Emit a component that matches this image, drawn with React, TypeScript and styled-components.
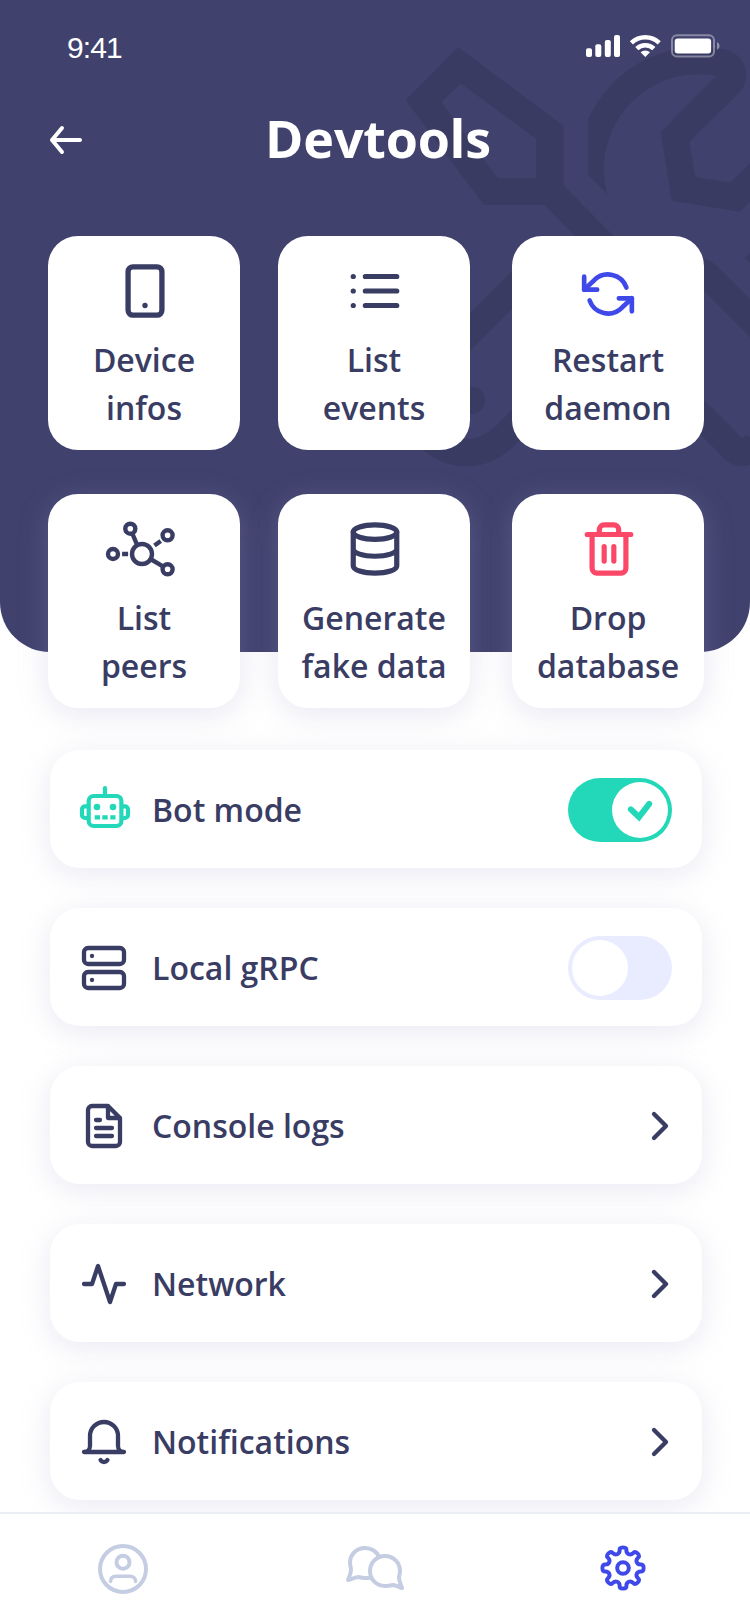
import React from "react";
import styled, { createGlobalStyle } from "styled-components";

const color = {
  navy: "#40416d",
  tool: "#393b62",
  ink: "#393c63",
  blue: "#3f49ea",
  red: "#fc4868",
  green: "#22d8b8",
  lavender: "#e9ecff",
  mist: "#c5cde2",
  line: "#eceef6",
};

const GlobalStyle = createGlobalStyle`
  *, *::before, *::after { box-sizing: border-box; }
  body { margin: 0; background: #fff; }
`;

const Screen = styled.div`
  display: flex;
  flex-direction: column;
  width: 750px;
  height: 1624px;
  overflow: hidden;
  background: #fff;
  color: ${color.ink};
  font-family: "Open Sans", "Noto Sans", sans-serif;
`;

const Header = styled.header`
  position: relative;
  z-index: 1;
  flex: none;
  height: 652px;
  background: ${color.navy};
  border-radius: 0 0 50px 50px;
`;

const ToolsArt = styled.svg`
  position: absolute;
  top: 0;
  left: 0;
  pointer-events: none;
`;

const StatusBar = styled.div`
  position: relative;
  display: flex;
  justify-content: space-between;
  height: 94px;
  padding: 30px 28px 0 67px;
`;

const Clock = styled.span`
  color: #fff;
  font: 400 30px/36px "Liberation Sans", Arial, sans-serif;
  letter-spacing: -0.9px;
`;

const TitleBar = styled.div`
  position: relative;
  display: grid;
  grid-template-columns: 48px 1fr 48px;
  align-items: center;
  height: 92px;
  padding: 0 39px 0 45px;
`;

const BackButton = styled.button`
  display: flex;
  padding: 0;
  border: 0;
  background: none;
`;

const Title = styled.h1`
  margin: 0;
  padding-bottom: 4px;
  color: #fff;
  font-size: 52px;
  font-weight: 700;
  letter-spacing: -0.2px;
  line-height: 72px;
  text-align: center;
`;

const TileGrid = styled.div`
  position: relative;
  display: grid;
  grid-template-columns: 230px 234px 192px;
  row-gap: 44px;
  margin: 50px 0 0 48px;
`;

const Tile = styled.div<{ $raised?: boolean }>`
  display: flex;
  flex-direction: column;
  align-items: center;
  width: 192px;
  height: 214px;
  padding-top: 26px;
  border-radius: 30px;
  background: #fff;
  box-shadow: ${(p) => (p.$raised ? "0 6px 30px rgba(160, 160, 205, 0.25)" : "none")};
`;

const TileIcon = styled.div`
  display: flex;
  align-items: center;
  justify-content: center;
  height: 58px;
  padding-left: 2px;
`;

const TileLabel = styled.div`
  margin-top: 16px;
  font-size: 32px;
  font-weight: 600;
  line-height: 48px;
  text-align: center;
  white-space: pre-line;
`;

const List = styled.main`
  display: flex;
  flex: 1;
  flex-direction: column;
  gap: 40px;
  min-height: 0;
  overflow: hidden;
  padding: 98px 48px 0 50px;
`;

const Row = styled.div<{ $end: number }>`
  display: flex;
  flex: none;
  align-items: center;
  height: 118px;
  padding: 0 ${(p) => p.$end}px 0 30px;
  border-radius: 30px;
  background: #fff;
  box-shadow: 0 6px 30px rgba(160, 160, 205, 0.23);
`;

const RowIcon = styled.div`
  display: flex;
  width: 50px;
  padding-top: 2px;
`;

const RowLabel = styled.div`
  flex: 1;
  padding-left: 22px;
  padding-top: 2px;
  font-size: 32px;
  font-weight: 600;
  line-height: 44px;
`;

const Toggle = styled.div<{ $on?: boolean }>`
  display: flex;
  justify-content: ${(p) => (p.$on ? "flex-end" : "flex-start")};
  width: 104px;
  height: 64px;
  padding: 4px;
  margin-top: 2px;
  border-radius: 32px;
  background: ${(p) => (p.$on ? color.green : color.lavender)};
`;

const Knob = styled.div`
  width: 56px;
  height: 56px;
  border-radius: 50%;
  background: #fff;
`;

const ChevronBox = styled.div`
  display: flex;
  padding-top: 2px;
`;

const TabBar = styled.nav`
  display: flex;
  flex: none;
  align-items: flex-start;
  justify-content: space-between;
  height: 112px;
  padding: 28px 98px 0 94px;
  border-top: 2px solid ${color.line};
  background: #fff;
`;

type IconProps = { size: number; stroke?: string; width?: number; children: React.ReactNode };

const Icon = ({ size, stroke = color.ink, width = 2.15, children }: IconProps) => (
  <svg
    width={size}
    height={size}
    viewBox="0 0 24 24"
    fill="none"
    stroke={stroke}
    strokeWidth={width}
    strokeLinecap="round"
    strokeLinejoin="round"
  >
    {children}
  </svg>
);

const Peers = () => (
  <svg width="72" height="58" viewBox="108.7 520 72 58" overflow="visible" fill="none" stroke={color.ink} strokeWidth="4.4">
    <circle cx="141.7" cy="554" r="10" />
    <circle cx="112.7" cy="554" r="5" />
    <circle cx="130" cy="528.7" r="5" />
    <circle cx="167.3" cy="535.3" r="5" />
    <circle cx="167.3" cy="569.3" r="5" />
    <path d="M132 533.5l4.4 10.4M151 559.5l11.6 6.8" />
    <path d="M121.8 554h6M154.2 545.6l6.2-4.6" />
  </svg>
);

const Robot = () => (
  <svg width="50" height="48" viewBox="80 786 50 48" overflow="visible" fill="none" stroke={color.green} strokeWidth="4.2">
    <rect x="88.7" y="796" width="32.7" height="30" rx="5" />
    <path d="M105 788v7" strokeLinecap="round" />
    <path d="M88 806.3h-3a3 3 0 0 0-3 3V815a3 3 0 0 0 3 3h3M122 806.3h3a3 3 0 0 1 3 3V815a3 3 0 0 1-3 3h-3" />
    <path d="M94.7 817.4h5.3M102.3 817.4h5.4M110.3 817.4h5.2" />
    <g fill={color.green} stroke="none">
      <circle cx="97" cy="807" r="3.3" />
      <circle cx="113" cy="807" r="3.3" />
    </g>
  </svg>
);

// Eight lobes around the origin, each joined to the next through a rounded valley.
const gearPath = (() => {
  const turn = (x: number, y: number, deg: number) => {
    const a = (deg * Math.PI) / 180;
    return `${(x * Math.cos(a) - y * Math.sin(a)).toFixed(2)} ${(x * Math.sin(a) + y * Math.cos(a)).toFixed(2)}`;
  };
  let d = "M0 -20.6";
  for (let i = 0; i < 8; i++) {
    const tip = i * 45;
    const valley = tip + 22.5;
    d += ` C${turn(6.4, -20.6, tip)} ${turn(-5.4, -14.9, valley)} ${turn(0, -14.9, valley)}`;
    d += ` C${turn(5.4, -14.9, valley)} ${turn(-6.4, -20.6, tip + 45)} ${turn(0, -20.6, tip + 45)}`;
  }
  return d + "Z";
})();

const tiles = [
  {
    label: "Device\ninfos",
    icon: (
      <Icon size={58} width={2.2}>
        <rect x="5" y="2" width="14" height="20" rx="2" />
        <path d="M12 18h.01" />
      </Icon>
    ),
  },
  {
    label: "List\nevents",
    icon: (
      <Icon size={58}>
        <path d="M8 6h13M8 12h13M8 18h13M3 6h.01M3 12h.01M3 18h.01" />
      </Icon>
    ),
  },
  {
    label: "Restart\ndaemon",
    icon: (
      <svg
        width="54"
        height="58"
        viewBox="0 -2.77 24.92 26.77"
        overflow="visible"
        fill="none"
        stroke={color.blue}
        strokeWidth="2.15"
        strokeLinecap="round"
        strokeLinejoin="round"
      >
        <path d="M1 4v6h6M23 20v-6h-6" />
        <path d="M20.49 9A9 9 0 0 0 5.64 5.64L1 10m22 4l-4.64 4.36A9 9 0 0 1 3.51 15" />
      </svg>
    ),
  },
  { label: "List\npeers", icon: <Peers />, raised: true },
  {
    label: "Generate\nfake data",
    raised: true,
    icon: (
      <Icon size={58}>
        <ellipse cx="12" cy="5" rx="9" ry="3" />
        <path d="M21 12c0 1.66-4 3-9 3s-9-1.34-9-3M3 5v14c0 1.66 4 3 9 3s9-1.34 9-3V5" />
      </Icon>
    ),
  },
  {
    label: "Drop\ndatabase",
    raised: true,
    icon: (
      <Icon size={58} stroke={color.red}>
        <path d="M3 6h18M19 6v14a2 2 0 0 1-2 2H7a2 2 0 0 1-2-2V6m3 0V4a2 2 0 0 1 2-2h4a2 2 0 0 1 2 2v2M10 11v6M14 11v6" />
      </Icon>
    ),
  },
];

const Chevron = () => (
  <ChevronBox>
    <Icon size={48}>
      <path d="M9 18l6-6-6-6" />
    </Icon>
  </ChevronBox>
);

const rows = [
  {
    label: "Bot mode",
    icon: <Robot />,
    end: 30,
    control: (
      <Toggle $on>
        <Knob>
          <svg width="56" height="56" viewBox="612 782 56 56" fill="none" stroke={color.green} strokeWidth="6">
            <path d="M630.9 809.4l8.1 7.6 10.2-13.2" strokeLinecap="round" />
          </svg>
        </Knob>
      </Toggle>
    ),
  },
  {
    label: "Local gRPC",
    end: 30,
    icon: (
      <Icon size={48}>
        <rect x="2" y="2" width="20" height="8" rx="2" />
        <rect x="2" y="14" width="20" height="8" rx="2" />
        <path d="M6 6h.01M6 18h.01" />
      </Icon>
    ),
    control: (
      <Toggle>
        <Knob />
      </Toggle>
    ),
  },
  {
    label: "Console logs",
    end: 18,
    icon: (
      <Icon size={48}>
        <path d="M14 2H6a2 2 0 0 0-2 2v16a2 2 0 0 0 2 2h12a2 2 0 0 0 2-2V8zM14 2v6h6M16 13H8M16 17H8M10 9H8" />
      </Icon>
    ),
    control: <Chevron />,
  },
  {
    label: "Network",
    end: 18,
    icon: (
      <Icon size={48}>
        <path d="M22 12h-4l-3 9L9 3l-3 9H2" />
      </Icon>
    ),
    control: <Chevron />,
  },
  {
    label: "Notifications",
    end: 18,
    icon: (
      <Icon size={48}>
        <path d="M22 17H2a3 3 0 0 0 3-3V9a7 7 0 0 1 14 0v5a3 3 0 0 0 3 3zM13.73 21a2 2 0 0 1-3.46 0" />
      </Icon>
    ),
    control: <Chevron />,
  },
];

export default function App() {
  return (
    <Screen>
      <GlobalStyle />
      <Header>
        <ToolsArt width="750" height="652" viewBox="0 0 750 652" fill={color.tool}>
          <path
            fillRule="evenodd"
            d="M458.3 47.3L563.3 125.7V185.3L660 283L640 302L544.7 205H484L405.7 100.3ZM460.7 83.3L441.3 102.3L497.7 178H536.3V139Z"
          />
          <path d="M588.3 119.3A122 122 0 0 1 721.7 49A26 26 0 0 1 740 91.7L689.3 141.7L695.3 177L730.3 182.7L750 163.3V201.7L740 211.7L671.7 200.7L660.7 132.3L716 75.7A95 95 0 0 0 607.3 194.3L588.3 175.3Z" />
          <path d="M750 253.5L744.5 258L750 262.5Z" />
          <path
            fill="none"
            stroke={color.tool}
            strokeWidth="27"
            d="M530 272L429 373A48 48 0 0 0 463.5 452.7C480 453.5 494 446 504 437L600 341"
          />
          <circle cx="471.3" cy="400.3" r="13.7" />
          <path
            fill="none"
            stroke={color.tool}
            strokeWidth="27"
            d="M640 320L685 277Q697 265 709 277L760 328M640 355L727 442Q742 463 757 442"
          />
        </ToolsArt>
        <StatusBar>
          <Clock>9:41</Clock>
          <svg width="140" height="30" viewBox="582 30 140 30" fill="#fff">
            <rect x="586" y="48.3" width="6" height="8.7" rx="2" />
            <rect x="595.3" y="44.3" width="6" height="12.7" rx="2" />
            <rect x="604.8" y="40" width="6" height="17" rx="2" />
            <rect x="614" y="35" width="6" height="22" rx="2" />
            <g fill="none" stroke="#fff" strokeWidth="4.6">
              <path d="M631.4 42.8A20.2 20.2 0 0 1 659.2 42.8" />
              <path d="M636.8 48.6A12.4 12.4 0 0 1 653.8 48.6" />
            </g>
            <path d="M640.6 52.3A7 7 0 0 1 650 52.3L645.3 57Z" />
            <rect x="672" y="35.3" width="42" height="21.2" rx="5" fill="none" stroke="#fff" strokeWidth="2" opacity="0.38" />
            <rect x="674.7" y="38.4" width="36.4" height="15.2" rx="3" />
            <path d="M717 42Q719.6 43.2 719.6 46Q719.6 48.8 717 50Z" opacity="0.42" />
          </svg>
        </StatusBar>
        <TitleBar>
          <BackButton aria-label="Back">
            <svg width="40" height="40" viewBox="45 120 40 40" fill="none" stroke="#fff" strokeWidth="4" strokeLinecap="round" strokeLinejoin="round">
              <path d="M80 140H52M62 128L52 140L62 152" />
            </svg>
          </BackButton>
          <Title>Devtools</Title>
        </TitleBar>
        <TileGrid>
          {tiles.map((t) => (
            <Tile key={t.label} $raised={t.raised}>
              <TileIcon>{t.icon}</TileIcon>
              <TileLabel>{t.label}</TileLabel>
            </Tile>
          ))}
        </TileGrid>
      </Header>
      <List>
        {rows.map((r) => (
          <Row key={r.label} $end={r.end}>
            <RowIcon>{r.icon}</RowIcon>
            <RowLabel>{r.label}</RowLabel>
            {r.control}
          </Row>
        ))}
      </List>
      <TabBar>
        <svg width="58" height="54" viewBox="94 1542 58 54" fill="none" stroke={color.mist} strokeWidth="4" strokeLinecap="round">
          <circle cx="123" cy="1569" r="23" />
          <circle cx="123" cy="1562.3" r="6.5" />
          <path d="M110.6 1581.6C110.6 1578.5 112.5 1576.3 116 1576.3H130C133.5 1576.3 135.6 1578.5 135.6 1581.6" strokeWidth="3.4" />
        </svg>
        <svg width="62" height="54" viewBox="342 1542 62 54" overflow="visible" fill="none" stroke={color.mist} strokeWidth="4" strokeLinecap="round" strokeLinejoin="round">
          <path d="M379.3 1557C376.5 1551.5 371 1548 365 1548C356.5 1548 350 1554.5 350 1562.5C350 1565.5 351 1567.5 351 1570C351 1573.5 349 1577 348 1580C352 1579 355.5 1577 358.5 1577C362 1577.5 365 1579 370 1577.6" />
          <path d="M385 1556C376.5 1556 370 1562.7 370 1571C370 1579.5 376.5 1586 385 1586C388.5 1586 390.5 1585 393 1585C396.5 1585.3 399 1587.3 402 1588C401.3 1585 399 1581.5 399 1578C399 1575.5 400 1574 400 1571C400 1562.7 393.5 1556 385 1556Z" />
        </svg>
        <svg width="58" height="52" viewBox="594 1542 58 52" fill="none" stroke={color.blue} strokeWidth="4">
          <g transform="translate(623 1568)">
            <circle r="5.8" />
            <path d={gearPath} strokeLinejoin="round" />
          </g>
        </svg>
      </TabBar>
    </Screen>
  );
}
